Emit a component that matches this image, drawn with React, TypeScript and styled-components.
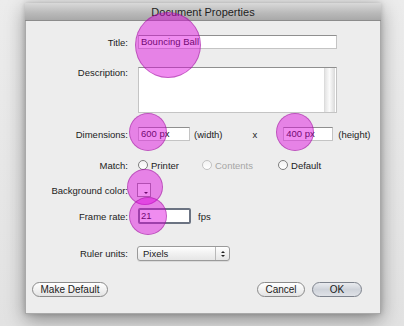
import React from 'react';
import styled, { createGlobalStyle } from 'styled-components';

const Global = createGlobalStyle`
    html, body {
        margin: 0;
        padding: 0;
        background: #e4e4e4;
        font-family: "Liberation Sans", Arial, sans-serif;
        color: #1c1c1c;
    }
`

const Page = styled.div`
    position: relative;
    width: 404px;
    height: 326px;
    overflow: hidden;
    background: linear-gradient(#ececec, #e2e2e2);
    padding: 3px 0 0 25px;
    box-sizing: border-box;
`

const Window = styled.div`
    width: 356px;
    height: 311px;
    background: #ededed;
    border: 1px solid #a9a9a9;
    border-top: none;
    box-sizing: border-box;
    box-shadow: 0 6px 18px rgba(0, 0, 0, 0.38), 0 0 5px rgba(0, 0, 0, 0.18);
    display: flex;
    flex-direction: column;
`

const TitleBar = styled.div`
    height: 17px;
    background: linear-gradient(#d9d9d9, #b9b9b9 60%, #a9a9a9);
    border-bottom: 1px solid #8c8c8c;
    display: flex;
    align-items: center;
    justify-content: center;
    font-size: 11px;
    color: #1e1e1e;
    margin: 0 -1px;
`

const Body = styled.div`
    flex: 1;
    display: flex;
    flex-direction: column;
    padding: 14px 0 0 0;
`

const Row = styled.div<{ $mt: number; $h: number; $top?: boolean }>`
    display: grid;
    grid-template-columns: 102px 1fr;
    column-gap: 10px;
    align-items: ${p => (p.$top ? 'start' : 'center')};
    margin-top: ${p => p.$mt}px;
    height: ${p => p.$h}px;
`

const Label = styled.div`
    text-align: right;
    font-size: 9.5px;
    white-space: nowrap;
`

const Field = styled.div`
    display: flex;
    align-items: center;
    font-size: 9.5px;
    height: 100%;
`

const TextInput = styled.div<{ $w: number; $ml?: number; $focus?: boolean }>`
    width: ${p => p.$w}px;
    height: 100%;
    margin-left: ${p => p.$ml || 0}px;
    box-sizing: border-box;
    background: #fff;
    border: 1px solid #c4c4c4;
    border-top-color: #8f8f8f;
    font-size: 9.5px;
    line-height: 12px;
    padding-left: 2px;
    display: flex;
    align-items: center;
    color: #111;
    ${p => p.$focus && `
        border: 2px solid #6b7382;
        border-radius: 2px;
        padding-left: 1px;
    `}
`

const TextArea = styled.div`
    width: 199px;
    height: 46px;
    box-sizing: border-box;
    background: #fff;
    border: 1px solid #c4c4c4;
    border-top-color: #8f8f8f;
    display: flex;
    justify-content: flex-end;
`

const ScrollTrack = styled.div`
    width: 10px;
    margin-right: 1px;
    border-left: 1px solid #dcdcdc;
    background: linear-gradient(to right, #e4e4e4, #fbfbfb 45%, #d9d9d9);
`

const Note = styled.span<{ $ml: number; $muted?: boolean }>`
    margin-left: ${p => p.$ml}px;
    color: ${p => (p.$muted ? '#a6a6a6' : '#1c1c1c')};
    white-space: nowrap;
`

const Radio = styled.span<{ $ml: number; $muted?: boolean }>`
    width: 10px;
    height: 10px;
    box-sizing: border-box;
    border-radius: 50%;
    margin-left: ${p => p.$ml}px;
    border: 1px solid ${p => (p.$muted ? '#c2c2c2' : '#7e7e7e')};
    background: linear-gradient(#f2f2f2, #ffffff);
    flex: none;
`

const Swatch = styled.div`
    position: relative;
    width: 14px;
    height: 14px;
    box-sizing: border-box;
    border: 1px solid #8e8e8e;
    background: #fff;
    margin-left: -1px;
    &::after {
        content: "";
        position: absolute;
        right: 2px;
        bottom: 2px;
        border-left: 2px solid transparent;
        border-right: 2px solid transparent;
        border-top: 2px solid #111;
    }
`

const Select = styled.div`
    width: 93px;
    height: 15px;
    box-sizing: border-box;
    margin-left: -1px;
    border: 1px solid #9a9a9a;
    border-radius: 3px;
    background: linear-gradient(#ffffff, #f1f1f1 50%, #e6e6e6);
    box-shadow: 0 1px 0 rgba(0, 0, 0, 0.08);
    display: flex;
    align-items: center;
    font-size: 9.5px;
`

const SelectText = styled.span`
    flex: 1;
    padding-left: 5px;
`

const Stepper = styled.span`
    width: 13px;
    height: 100%;
    border-left: 1px solid #b8b8b8;
    display: flex;
    flex-direction: column;
    align-items: center;
    justify-content: center;
    gap: 2px;
`

const Arrow = styled.span<{ $up?: boolean }>`
    border-left: 2px solid transparent;
    border-right: 2px solid transparent;
    ${p => (p.$up ? 'border-bottom: 2px solid #222;' : 'border-top: 2px solid #222;')}
`

const ButtonBar = styled.div`
    display: flex;
    align-items: center;
    margin-top: 21px;
    padding: 0 18px 0 6px;
`

const Button = styled.div<{ $w: number; $default?: boolean; $ml?: number }>`
    width: ${p => p.$w}px;
    height: 15px;
    box-sizing: border-box;
    margin-left: ${p => p.$ml || 0}px;
    border: 1px solid ${p => (p.$default ? '#7d828c' : '#8a8a8a')};
    border-radius: 8px;
    background: ${p => (p.$default
        ? 'linear-gradient(#e9ebef, #cfd3da 50%, #dfe2e7)'
        : 'linear-gradient(#ffffff, #f2f2f2 50%, #e3e3e3)')};
    font-size: 10px;
    display: flex;
    align-items: center;
    justify-content: center;
    color: #1a1a1a;
`

const Spacer = styled.div`
    flex: 1;
`

const Highlight = styled.div<{ $x: number; $y: number; $r: number }>`
    position: absolute;
    left: ${p => p.$x - p.$r}px;
    top: ${p => p.$y - p.$r}px;
    width: ${p => p.$r * 2}px;
    height: ${p => p.$r * 2}px;
    box-sizing: border-box;
    border-radius: 50%;
    background: rgba(222, 0, 222, 0.45);
    border: 1px solid rgba(140, 20, 140, 0.45);
    pointer-events: none;
`

export default function App() {
    return (
        <Page>
            <Global />
            <Window>
                <TitleBar>Document Properties</TitleBar>
                <Body>
                    <Row $mt={0} $h={14}>
                        <Label>Title:</Label>
                        <Field>
                            <TextInput $w={199}>Bouncing Ball</TextInput>
                        </Field>
                    </Row>
                    <Row $mt={18} $h={46} $top>
                        <Label>Description:</Label>
                        <TextArea>
                            <ScrollTrack />
                        </TextArea>
                    </Row>
                    <Row $mt={14} $h={14}>
                        <Label>Dimensions:</Label>
                        <Field>
                            <TextInput $w={52}>600 px</TextInput>
                            <Note $ml={4}>(width)</Note>
                            <Note $ml={30}>x</Note>
                            <TextInput $w={50} $ml={26}>400 px</TextInput>
                            <Note $ml={5}>(height)</Note>
                        </Field>
                    </Row>
                    <Row $mt={18} $h={12}>
                        <Label>Match:</Label>
                        <Field>
                            <Radio $ml={0} />
                            <Note $ml={3}>Printer</Note>
                            <Radio $ml={23} $muted />
                            <Note $ml={3} $muted>Contents</Note>
                            <Radio $ml={25} />
                            <Note $ml={3}>Default</Note>
                        </Field>
                    </Row>
                    <Row $mt={12} $h={14}>
                        <Label>Background color:</Label>
                        <Field>
                            <Swatch />
                        </Field>
                    </Row>
                    <Row $mt={11} $h={15}>
                        <Label>Frame rate:</Label>
                        <Field>
                            <TextInput $w={53} $focus>21</TextInput>
                            <Note $ml={7}>fps</Note>
                        </Field>
                    </Row>
                    <Row $mt={23} $h={15}>
                        <Label>Ruler units:</Label>
                        <Field>
                            <Select>
                                <SelectText>Pixels</SelectText>
                                <Stepper>
                                    <Arrow $up />
                                    <Arrow />
                                </Stepper>
                            </Select>
                        </Field>
                    </Row>
                    <ButtonBar>
                        <Button $w={76}>Make Default</Button>
                        <Spacer />
                        <Button $w={48}>Cancel</Button>
                        <Button $w={50} $ml={7} $default>OK</Button>
                    </ButtonBar>
                </Body>
            </Window>
            <Highlight $x={168} $y={45} $r={33} />
            <Highlight $x={148} $y={132} $r={19} />
            <Highlight $x={295} $y={132} $r={19} />
            <Highlight $x={145} $y={187} $r={18} />
            <Highlight $x={148} $y={216} $r={19} />
        </Page>
    );
}
